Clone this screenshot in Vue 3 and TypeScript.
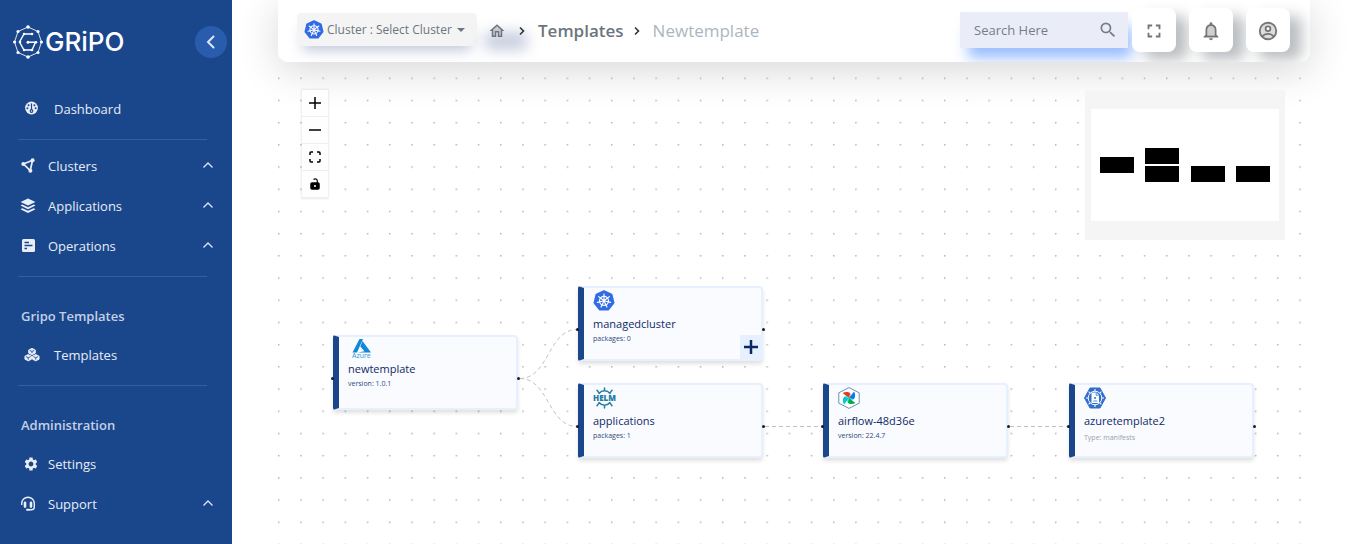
<script setup lang="ts">
import { ref } from 'vue'

interface NavItem { label: string; icon: string; kind: 'lead' | 'tight' | 'group' }
interface NavSection { title?: string; items: NavItem[] }
interface FlowNode { id: string; x: number; y: number; logo: string; title: string; note: string; muted?: boolean; addable?: boolean }

const sections: NavSection[] = [
  { items: [{ label: 'Dashboard', icon: 'gauge', kind: 'lead' }] },
  {
    items: [
      { label: 'Clusters', icon: 'network', kind: 'group' },
      { label: 'Applications', icon: 'layers', kind: 'group' },
      { label: 'Operations', icon: 'list', kind: 'group' },
    ],
  },
  { title: 'Gripo Templates', items: [{ label: 'Templates', icon: 'cubes', kind: 'lead' }] },
  {
    title: 'Administration',
    items: [
      { label: 'Settings', icon: 'gear', kind: 'tight' },
      { label: 'Support', icon: 'headset', kind: 'group' },
    ],
  },
]

const nodes: FlowNode[] = [
  { id: 'n1', x: 55, y: 273, logo: 'azure', title: 'newtemplate', note: 'version: 1.0.1' },
  { id: 'n2', x: 300, y: 224, logo: 'kube', title: 'managedcluster', note: 'packages: 0', addable: true },
  { id: 'n3', x: 300, y: 321, logo: 'helm', title: 'applications', note: 'packages: 1' },
  { id: 'n4', x: 545, y: 321, logo: 'airflow', title: 'airflow-48d36e', note: 'version: 22.4.7' },
  { id: 'n5', x: 791, y: 321, logo: 'manifest', title: 'azuretemplate2', note: 'Type: manifests', muted: true },
]

const edges = [
  'M242 316.500C271 316.500 270 267.500 299 267.500',
  'M242 316.500C271 316.500 270 364.500 299 364.500',
  'M487 364.500H545',
  'M732 364.500H790',
]

const miniNodes = [[15, 67], [60, 58], [60, 76], [106, 76], [151, 76]]
const spokes = [0, 45, 90, 135, 180, 225, 270, 315]
const blades = [
  { turn: 0, dark: '#e43921', light: '#ff7557' },
  { turn: 90, dark: '#017cee', light: '#0cb6ff' },
  { turn: 180, dark: '#00ad46', light: '#04d659' },
  { turn: 270, dark: '#00c7d4', light: '#11e1ee' },
]
const query = ref('')
</script>

<template>
  <div class="app">
    <svg class="defs" width="0" height="0" aria-hidden="true">
      <symbol id="kube" viewBox="0 0 24 24">
        <path d="M12 1.2 20.3 5.1 22.4 14 16.7 21.3H7.3L1.6 14 3.7 5.1Z" fill="#326ce5" stroke="#326ce5" stroke-width="2" stroke-linejoin="round" />
        <g fill="none" stroke="#fff" stroke-width="1.3" stroke-linecap="round">
          <circle cx="12" cy="11.8" r="4.9" />
          <path d="M12 4.4V10M17.8 7.2 13.4 10.7M19.2 13.5 13.8 12.3M15.2 18.5 12.8 13.6M8.8 18.5 11.2 13.6M4.8 13.5 10.2 12.3M6.2 7.2 10.6 10.7" />
        </g>
        <circle cx="12" cy="11.8" r="1.6" fill="#fff" />
      </symbol>
    </svg>

    <aside class="sidebar">
      <div class="brand">
        <a class="logo" href="#">
          <svg width="30" height="34" viewBox="0 0 30 34" aria-hidden="true">
            <g fill="none" stroke="#fff" stroke-width="1">
              <path d="M15 2 25 6.5 28.5 17 25 27.500 15 32 5 27.500 1.500 17 5 6.500Z" opacity=".85" />
              <path d="M19 9H11L6.500 17 11 25H19L22.500 17.300H15" stroke-width="1.400" />
            </g>
            <g fill="#fff">
              <circle cx="15" cy="2" r="1.800" /><circle cx="25" cy="6.500" r="1.600" /><circle cx="28.400" cy="17" r="1.600" /><circle cx="25" cy="27.500" r="1.600" />
              <circle cx="15" cy="32" r="1.800" /><circle cx="5" cy="27.500" r="1.600" /><circle cx="1.600" cy="17" r="1.600" /><circle cx="5" cy="6.500" r="1.600" />
              <circle cx="19" cy="9" r="1.300" /><circle cx="11" cy="9" r="1.200" /><circle cx="7" cy="17" r="1.300" /><circle cx="11" cy="25" r="1.200" /><circle cx="19" cy="25" r="1.300" /><circle cx="15" cy="17.300" r="1.500" /><circle cx="23" cy="17.300" r="1.300" />
            </g>
          </svg>
          <span>GRiPO</span>
        </a>
        <button class="collapse" type="button" aria-label="Collapse sidebar">
          <svg width="16" height="16" viewBox="0 0 16 16"><path d="M10.500 2.500 5 8l5.500 5.500" fill="none" stroke="#dfe6f5" stroke-width="2" stroke-linecap="round" /></svg>
        </button>
      </div>

      <nav>
        <section v-for="(section, i) in sections" :key="i">
          <h2 v-if="section.title">{{ section.title }}</h2>
          <component
            :is="item.kind === 'group' ? 'button' : 'a'"
            v-for="item in section.items"
            :key="item.label"
            class="item"
            :class="item.kind"
            :href="item.kind === 'group' ? undefined : '#'"
            :type="item.kind === 'group' ? 'button' : undefined"
          >
            <svg v-if="item.icon === 'gauge'" width="16" height="16" viewBox="0 0 16 16">
              <circle cx="7.500" cy="7" r="6.400" fill="#e9eef7" />
              <g fill="#1a478c"><circle cx="4.600" cy="4.200" r="1" /><circle cx="10.400" cy="4.200" r="1" /><circle cx="3.400" cy="7.300" r="1" /><circle cx="11.600" cy="7.300" r="1" /><circle cx="7.500" cy="10" r="1.900" /><path d="M6.900 2.400h1.200V9H6.900z" /></g>
              <circle cx="7.500" cy="10" r=".8" fill="#e9eef7" />
            </svg>
            <svg v-else-if="item.icon === 'network'" width="16" height="16" viewBox="0 0 16 16" fill="#e9eef7">
              <path d="M12.500 2.300 3.500 6 10.300 12.500Z" fill="none" stroke="#e9eef7" stroke-width="1.700" />
              <circle cx="12.600" cy="2.300" r="2" /><circle cx="3.300" cy="6" r="2" /><circle cx="10.400" cy="12.800" r="2" />
            </svg>
            <svg v-else-if="item.icon === 'layers'" width="16" height="16" viewBox="0 0 16 16" fill="#e9eef7">
              <path d="M8 .5 15.500 4 8 7.500.5 4ZM2.300 6.600 8 9.200l5.700-2.600 1.800 1L8 11.300.5 7.600ZM2.300 10.200 8 12.800l5.700-2.600 1.800 1L8 14.900.5 11.200Z" />
            </svg>
            <svg v-else-if="item.icon === 'list'" width="16" height="16" viewBox="0 0 16 16">
              <rect x="2" y="1" width="13" height="13" rx="1.500" fill="#e9eef7" /><path d="M4.500 4.500H9M4.500 7.500H12.500M4.500 10.500H7" stroke="#1a478c" stroke-width="1.400" />
            </svg>
            <svg v-else-if="item.icon === 'cubes'" width="16" height="16" viewBox="0 0 17 16" fill="#e9eef7" stroke="#e9eef7" stroke-linejoin="round">
              <path d="M8.500 1 12 2.600V6L8.500 7.700 5 6V2.600ZM4.500 7.500 8 9.200v3.300L4.500 14.200 1 12.500V9.200ZM12.500 7.500 16 9.200v3.300l-3.500 1.700L9 12.500V9.200Z" />
              <path d="M6 3.100 8.500 4.200 11 3.100M8.500 4.200v2M2 9.700l2.500 1.200L7 9.700M4.500 10.900v2M10 9.700l2.500 1.200L15 9.700M12.500 10.900v2" fill="none" stroke="#1a478c" stroke-width=".9" />
            </svg>
            <svg v-else-if="item.icon === 'gear'" width="16" height="16" viewBox="0 0 24 24" fill="#e9eef7">
              <path d="M19.140 12.940c.04-.3.06-.61.06-.94 0-.32-.02-.64-.07-.94l2.030-1.580c.18-.14.23-.41.12-.61l-1.920-3.320c-.12-.22-.37-.29-.59-.22l-2.390.96c-.5-.38-1.030-.7-1.620-.94l-.36-2.540c-.04-.24-.24-.41-.48-.41h-3.840c-.24 0-.43.17-.47.41l-.36 2.540c-.59.24-1.130.57-1.620.94l-2.390-.96c-.22-.08-.47 0-.59.22L2.740 8.870c-.12.21-.08.47.12.61l2.030 1.580c-.05.3-.09.63-.09.94s.02.64.07.94l-2.030 1.580c-.18.14-.23.41-.12.61l1.920 3.320c.12.22.37.29.59.22l2.390-.96c.5.38 1.030.7 1.620.94l.36 2.540c.05.24.24.41.48.41h3.840c.24 0 .44-.17.47-.41l.36-2.540c.59-.24 1.130-.56 1.620-.94l2.390.96c.22.08.47 0 .59-.22l1.920-3.320c.12-.22.07-.47-.12-.61l-2.010-1.580zM12 15.600c-1.980 0-3.600-1.620-3.600-3.600s1.620-3.600 3.600-3.600 3.600 1.620 3.600 3.600-1.620 3.600-3.600 3.600z" />
            </svg>
            <svg v-else width="16" height="16" viewBox="0 0 16 16" fill="none" stroke="#e9eef7" stroke-width="1.400">
              <path d="M1.700 9V7.500a6.300 6.300 0 0 1 12.600 0v3.800a2.400 2.400 0 0 1-2.400 2.400H9" /><path d="M5 6.800v3.800M11 6.800v3.800" stroke-width="2.600" stroke-linecap="round" /><path d="M7 13.800h2" stroke-width="2" stroke-linecap="round" />
            </svg>
            <span>{{ item.label }}</span>
            <svg v-if="item.kind === 'group'" class="caret" width="12" height="12" viewBox="0 0 12 12"><path d="M1.500 7.500 6 3 10.500 7.500" fill="none" stroke="#dfe6f5" stroke-width="1.300" /></svg>
          </component>
        </section>
      </nav>
    </aside>

    <main>
      <div class="bar-wrap">
        <header class="topbar">
          <button class="cluster" type="button">
            <svg width="20" height="20"><use href="#kube" /></svg>
            <span>Cluster : Select Cluster</span>
            <svg width="8" height="4" viewBox="0 0 8 4"><path d="M0 0h8L4 4z" fill="#6c757d" /></svg>
          </button>
          <nav class="crumbs" aria-label="Breadcrumb">
            <a class="home" href="#" aria-label="Home">
              <svg width="18" height="18" viewBox="0 0 24 24" fill="#6c757d"><path d="M7 10.200V18h2v-6h6v6h2v-7.800l-5-4.500z" opacity=".3" /><path d="M12 3 2 12h3v8h6v-6h2v6h6v-8h3L12 3zm5 15h-2v-6H9v6H7v-7.810l5-4.500 5 4.500V18z" /></svg>
            </a>
            <svg class="sep" width="8" height="12" viewBox="0 0 8 12"><path d="M2 2.500 5.500 6 2 9.500" /></svg>
            <a class="section" href="#">Templates</a>
            <svg class="sep last" width="8" height="12" viewBox="0 0 8 12"><path d="M2 2.500 5.500 6 2 9.500" /></svg>
            <span class="current">Newtemplate</span>
          </nav>
          <form class="search" role="search" @submit.prevent>
            <input v-model="query" type="text" placeholder="Search Here" aria-label="Search Here" />
            <button type="submit" aria-label="Search">
              <svg width="20" height="20" viewBox="0 0 24 24" fill="#777d87"><path d="M15.500 14h-.79l-.28-.27A6.471 6.471 0 0 0 16 9.500 6.500 6.500 0 1 0 9.500 16c1.610 0 3.090-.59 4.230-1.570l.27.28v.79l5 4.990L20.490 19l-4.990-5zm-6 0C7.010 14 5 11.990 5 9.500S7.010 5 9.500 5 14 7.010 14 9.500 11.990 14 9.500 14z" /></svg>
            </button>
          </form>
          <div class="tools">
            <button type="button" aria-label="Full screen"><svg width="22" height="22" viewBox="0 0 24 24" fill="#757575"><path d="M7 14H5v5h5v-2H7v-3zm-2-4h2V7h3V5H5v5zm12 7h-3v2h5v-5h-2v3zM14 5v2h3v3h2V5h-5z" /></svg></button>
            <button type="button" aria-label="Notifications"><svg width="22" height="22" viewBox="0 0 24 24" fill="#757575"><path d="M8 17h8v-6c0-2.480-1.500-4.500-4-4.500S8 8.500 8 11z" opacity=".35" /><path d="M12 22c1.100 0 2-.9 2-2h-4c0 1.100.9 2 2 2zm6-6v-5c0-3.070-1.630-5.640-4.500-6.320V4c0-.83-.67-1.500-1.500-1.500s-1.500.67-1.500 1.500v.68C7.640 5.360 6 7.920 6 11v5l-2 2v1h16v-1l-2-2zm-2 1H8v-6c0-2.480 1.510-4.500 4-4.500s4 2.020 4 4.500v6z" /></svg></button>
            <button type="button" aria-label="Account"><svg width="22" height="22" viewBox="0 0 24 24" fill="none" stroke="#757575" stroke-width="2"><circle cx="12" cy="12" r="9" fill="#ddd" /><circle cx="12" cy="9.500" r="2.600" fill="#fff" /><path d="M5.800 18c1.500-1.900 3.700-2.800 6.200-2.800s4.700.9 6.200 2.800" /></svg></button>
          </div>
        </header>
      </div>

      <div class="canvas">
        <svg class="wires" width="100%" height="100%" aria-hidden="true">
          <pattern id="dots" width="22.200" height="22.200" patternUnits="userSpaceOnUse" x="0" y="15.500">
            <circle cx=".8" cy=".8" r=".8" fill="#a2a2a8" />
          </pattern>
          <rect width="100%" height="100%" fill="url(#dots)" />
          <path v-for="d in edges" :key="d" :d="d" fill="none" stroke="#c2c2c4" stroke-dasharray="4 3" />
        </svg>

        <article v-for="n in nodes" :key="n.id" class="node" :class="[n.logo, { muted: n.muted }]" :style="{ left: n.x + 'px', top: n.y + 'px' }">
          <i class="handle in"></i>
          <svg v-if="n.logo === 'azure'" class="mark" width="26" height="20" viewBox="0 0 26 20">
            <path d="M11.500 0H15L9 13.500H4.500ZM14.500 2 23 13.500H10L16.500 12.200 12.300 7.500Z" fill="#1488d8" />
            <text x="4" y="19" font-family="Open Sans, sans-serif" font-size="7" fill="#2b96dc">Azure</text>
          </svg>
          <svg v-else-if="n.logo === 'kube'" class="mark" width="22" height="22"><use href="#kube" /></svg>
          <svg v-else-if="n.logo === 'helm'" class="mark" width="24" height="22" viewBox="0 0 24 22">
            <g fill="none" stroke="#277a9f" stroke-width="1.500" stroke-linecap="round">
              <path d="M6 6.500a7 7 0 0 1 11 0M6 15.500a7 7 0 0 0 11 0M11.500 3.800V1M11.500 18.200V21M5.800 5.600 4 3.300M17.200 5.600 19 3.300M5.800 16.400 4 18.700M17.200 16.400 19 18.700" />
            </g>
            <text x="0" y="14" font-family="Open Sans, sans-serif" font-size="8" font-weight="800" fill="#277a9f">HELM</text>
          </svg>
          <svg v-else-if="n.logo === 'airflow'" class="mark" width="22" height="22" viewBox="0 0 22 22">
            <path d="M11 .6 21.200 5.800V16.200L11 21.400.8 16.200V5.800Z" fill="#fff" stroke="#6a91b4" stroke-linejoin="round" />
            <g v-for="b in blades" :key="b.turn" :transform="`rotate(${b.turn} 11 11)`">
              <path d="M11 11 4.600 6C7 4.600 10.500 4.300 12.200 6.400Z" :fill="b.dark" />
              <path d="M11 11 12.200 6.400C13 7.500 12.800 9.500 11 11Z" :fill="b.light" />
            </g>
          </svg>
          <svg v-else class="mark" width="22" height="22" viewBox="0 0 22 22">
            <path d="M6 1H16L21.500 11 16 21H6L.5 11Z" fill="#316fce" stroke="#316fce" stroke-linejoin="round" />
            <g stroke="#fff" stroke-width="1"><circle cx="11" cy="11" r="6.800" fill="none" /><path v-for="a in spokes" :key="a" d="M11 4V2" :transform="`rotate(${a} 11 11)`" /></g>
            <path d="M7.500 5.500h5l2.500 2.500v8h-7.500z" fill="#fff" /><path d="M12.200 5.800v2.500h2.500M9.300 14h4" fill="none" stroke="#316fce" stroke-width=".8" /><circle cx="11" cy="11" r="1" fill="#316fce" />
          </svg>
          <h3>{{ n.title }}</h3>
          <p>{{ n.note }}</p>
          <button v-if="n.addable" class="add" type="button" aria-label="Add package">
            <svg width="14" height="14" viewBox="0 0 14 14"><path d="M7 0v14M0 7h14" stroke="#0d2766" stroke-width="2.500" /></svg>
          </button>
          <i class="handle out"></i>
        </article>

        <div class="controls">
          <button type="button" aria-label="Zoom in"><svg width="12" height="12" viewBox="0 0 12 12"><path d="M6 0v12M0 6h12" /></svg></button>
          <button type="button" aria-label="Zoom out"><svg width="12" height="12" viewBox="0 0 12 12"><path d="M0 6h12" /></svg></button>
          <button type="button" aria-label="Fit view"><svg width="12" height="12" viewBox="0 0 12 12"><path d="M1 4V2q0-1 1-1h2M8 1h2q1 0 1 1v2M11 8v2q0 1-1 1H8M4 11H2q-1 0-1-1V8" /></svg></button>
          <button type="button" aria-label="Lock canvas"><svg width="12" height="12" viewBox="0 0 12 12"><rect x="2" y="5" width="8" height="6" rx="1" /><path d="M4.500 1.400C6.500.2 8.300 1 8.300 3v2.500" fill="none" stroke-width="1.200" /><circle cx="6" cy="8" r="1" fill="#fff" stroke="none" /></svg></button>
        </div>

        <svg class="minimap" width="200" height="150" viewBox="0 0 200 150" role="img" aria-label="Mini map">
          <rect width="200" height="150" fill="#f5f5f5" />
          <rect x="6" y="19" width="188" height="112" fill="#fff" />
          <rect v-for="(m, i) in miniNodes" :key="i" :x="m[0]" :y="m[1]" width="34" height="16" />
        </svg>
      </div>
    </main>
  </div>
</template>

<style>
body { background: #fff; }
</style>

<style scoped>
.app { display: flex; min-height: 100vh; overflow: hidden; font-family: "Open Sans", "Noto Sans", sans-serif; }
.app *, .app *::before { box-sizing: border-box; }
.defs { position: absolute; }
button { border: 0; padding: 0; margin: 0; background: none; font: inherit; cursor: pointer; }
a { text-decoration: none; color: inherit; }

.sidebar { width: 232px; flex: none; background: #1a478c; color: #e6ecf6; }
.brand { display: flex; justify-content: space-between; align-items: center; height: 84px; padding: 0 5px 0 13px; margin-bottom: 5px; }
.logo { display: flex; align-items: center; gap: 2px; color: #fff; font: 500 26px/32px Inter, sans-serif; }
.collapse { display: grid; place-items: center; width: 32px; height: 32px; border-radius: 50%; background: #2a5cae; }
section + section::before { content: ""; display: block; height: 1px; margin: 10px 25px 6px 18px; background: #2f5fab; }
h2 { margin: 0; padding: 13px 0 0 21px; height: 52px; font-size: 13px; line-height: 41px; font-weight: 600; color: #c4d0e6; }
.item { display: flex; align-items: center; width: 100%; height: 40px; padding: 0 18px 0 20px; gap: 12px; font-size: 13px; line-height: 20px; color: #e6ecf6; text-align: left; }
.item.lead { padding-left: 24px; gap: 14px; }
.item.tight { padding-left: 23px; gap: 9px; }
.caret { margin-left: auto; }

main { flex: 1; min-width: 0; display: flex; flex-direction: column; padding: 0 37px 0 46px; }
.bar-wrap { border-radius: 0 0 10px 10px; box-shadow: 0 8px 40px rgba(0, 0, 0, .16); }
.topbar { display: flex; align-items: flex-start; height: 62px; padding: 0 20px 0 19px; background: #fff; border-radius: 0 0 10px 10px; overflow: hidden; }
.cluster { display: flex; align-items: center; gap: 3px; width: 180px; height: 33px; margin-top: 13px; padding: 0 7px; background: #f4f4f4; border-radius: 4px; color: #6c757d; font-size: 12px; line-height: 18px; white-space: nowrap; box-shadow: 0 10px 14px -6px rgba(70, 90, 150, .35); }
.cluster svg { flex: none; }
.cluster svg:last-child { margin-left: 2px; }
.crumbs { display: flex; align-items: center; height: 62px; margin-left: 11px; font-size: 17px; line-height: 24px; color: #6c757d; }
.home { position: relative; display: grid; place-items: center; width: 18px; height: 18px; }
.home::before { content: ""; position: absolute; left: -4px; top: 10px; width: 44px; height: 18px; border-radius: 8px; background: rgba(70, 90, 150, .3); filter: blur(7px); }
.home svg, .sep { position: relative; }
.sep { margin: 0 12px; fill: none; stroke: #333; stroke-width: 1.6; }
.sep.last { margin-left: 9px; }
.section { font-weight: 600; }
.current { color: #adb5bd; }
.search { display: flex; align-items: center; width: 168px; height: 36px; margin: 12px 4px 0 auto; padding: 0 10px 0 14px; background: #eaedf7; box-shadow: 6px 12px 14px -2px rgba(70, 135, 255, .55); }
.search input { flex: 1; min-width: 0; border: 0; padding: 0; background: none; outline: 0; color: #6c757d; font: 13px/20px "Open Sans", "Noto Sans", sans-serif; }
.search input::placeholder { color: #757d86; opacity: 1; }
.search button { height: 20px; }
.tools { display: flex; gap: 13px; margin-top: 8px; }
.tools button { position: relative; display: grid; place-items: center; width: 44px; height: 44px; padding-top: 2px; border-radius: 8px; background: #fff; box-shadow: 12px 8px 14px rgba(60, 68, 76, .34); }

.canvas { position: relative; flex: 1; min-height: 482px; }
.wires { position: absolute; inset: 0; }
.node { position: absolute; width: 185px; height: 75px; padding: 2px 9px; background: #f9fbff; border: 2px solid #e7f0fe; border-left: 6px solid #1a478c; border-radius: 2px 4px 4px 2px; box-shadow: 0 3px 4px rgba(0, 0, 0, .12); color: #0f2a66; }
.mark { display: block; height: 22px; }
h3 { margin: 4px 0 0; font-size: 11px; line-height: 16px; font-weight: 500; }
.azure .mark { height: 20px; }
.azure h3 { margin-top: 2px; }
p { margin: 0; font-size: 7px; line-height: 14px; color: #2f4a7c; }
.muted p { color: #999fa8; margin-top: 2px; }
.add { position: absolute; right: 0; bottom: 0; display: grid; place-items: center; width: 21px; height: 24px; background: #e7f0fe; }
.handle { position: absolute; top: 40px; width: 3px; height: 3px; border-radius: 50%; background: #1a192b; }
.in { left: -8px; }
.out { right: -4px; }

.controls { position: absolute; left: 24px; top: 28px; width: 26px; box-shadow: 0 0 2px 1px rgba(0, 0, 0, .08); }
.controls button { display: grid; place-items: center; width: 26px; height: 27px; background: #fefefe; border-bottom: 1px solid #eee; }
.controls svg { fill: #000; stroke: #000; stroke-width: 1.500; }
.controls button:nth-child(3) svg { fill: none; }
.minimap { position: absolute; right: 25px; top: 28px; }
</style>
